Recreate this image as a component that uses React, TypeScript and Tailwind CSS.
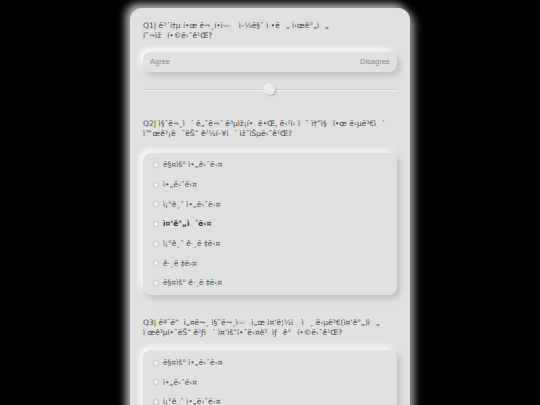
import React, { useState } from 'react'

const garble = (s: string) =>
  new TextDecoder('windows-1252').decode(new TextEncoder().encode(s))

const options = [
  '매우 아니다',
  '아니다',
  '조금 아니다',
  '중간이다',
  '조금 그렇다',
  '그렇다',
  '매우 그렇다',
]

const questions = [
  'Q1| 보통 한 문항에 얼마 정도 시간을 투자합니까?',
  'Q2| 질문이 너무 복잡할 때, 당신의 솔직한 답변이 왜곡되는 경향이 있습니까?',
  'Q3| 모든 설문 질문에서 중립적인 답변(중간)을 제공하는 것이 중요하다고 생각합니까?',
]

function Options({ selected, className }: { selected: number; className: string }) {
  return (
    <div
      className={`flex flex-col rounded-[8px] bg-[#e0e0e0] py-[2.5px] pl-[10px] shadow-[3px_3px_6px_#bcbcbc,-3px_-3px_6px_#ffffff] ${className}`}
    >
      {options.map((o, i) => (
        <label key={o} className="flex h-[19.7px] items-center gap-[4px]">
          <span className="h-[6px] w-[6px] rounded-full border border-[#cfcfcf] bg-[#f4f4f4] shadow-[0_0_1px_#bdbdbd]" />
          <span
            className={`font-['DejaVu_Sans',sans-serif] text-[7.5px] ${
              i === selected ? 'font-bold text-[#333]' : 'text-[#555]'
            }`}
          >
            {garble(o)}
          </span>
        </label>
      ))}
    </div>
  )
}

export default function App() {
  const [value] = useState(50)

  return (
    <div className="min-h-[405px] bg-black pt-[8px] font-['Liberation_Sans',Arial,sans-serif]">
      <div className="mx-auto w-[280px] rounded-[12px] bg-[#e0e0e0] px-[13px] pt-[12.5px] pb-[20px] shadow-[4px_4px_9px_#9a9a9a,-4px_-4px_9px_#bdbdbd]">
        {/* Q1 */}
        <p className="font-['DejaVu_Sans',sans-serif] text-[7.5px] leading-[10px] text-[#484848]">
          {garble(questions[0])}
        </p>
        <div className="mt-[11px] flex h-[20px] items-center justify-between rounded-[8px] bg-[#e0e0e0] px-[7px] text-[7.5px] text-[#8a8a8a] shadow-[3px_3px_6px_#bcbcbc,-3px_-3px_6px_#ffffff]">
          <span>Agree</span>
          <span>Disagree</span>
        </div>
        <div className="relative mt-[13px] flex h-[10px] items-center">
          <div className="h-[1.5px] w-full rounded-full bg-[#cdcdcd] shadow-[0_1px_0_#f2f2f2]" />
          <div
            className="absolute top-0 h-[10px] w-[10px] -translate-x-1/2 rounded-full bg-[#ececec] shadow-[1px_1px_2px_#b0b0b0,-1px_-1px_2px_#ffffff]"
            style={{ left: `${value}%` }}
          />
        </div>

        {/* Q2 */}
        <p className="mt-[24px] font-['DejaVu_Sans',sans-serif] text-[7.5px] leading-[10px] text-[#484848]">
          {garble(questions[1])}
        </p>
        <Options selected={3} className="mt-[14px]" />

        {/* Q3 */}
        <p className="mt-[23px] font-['DejaVu_Sans',sans-serif] text-[7.5px] leading-[10px] text-[#484848]">
          {garble(questions[2])}
        </p>
        <Options selected={-1} className="mt-[12px]" />
      </div>
    </div>
  )
}
